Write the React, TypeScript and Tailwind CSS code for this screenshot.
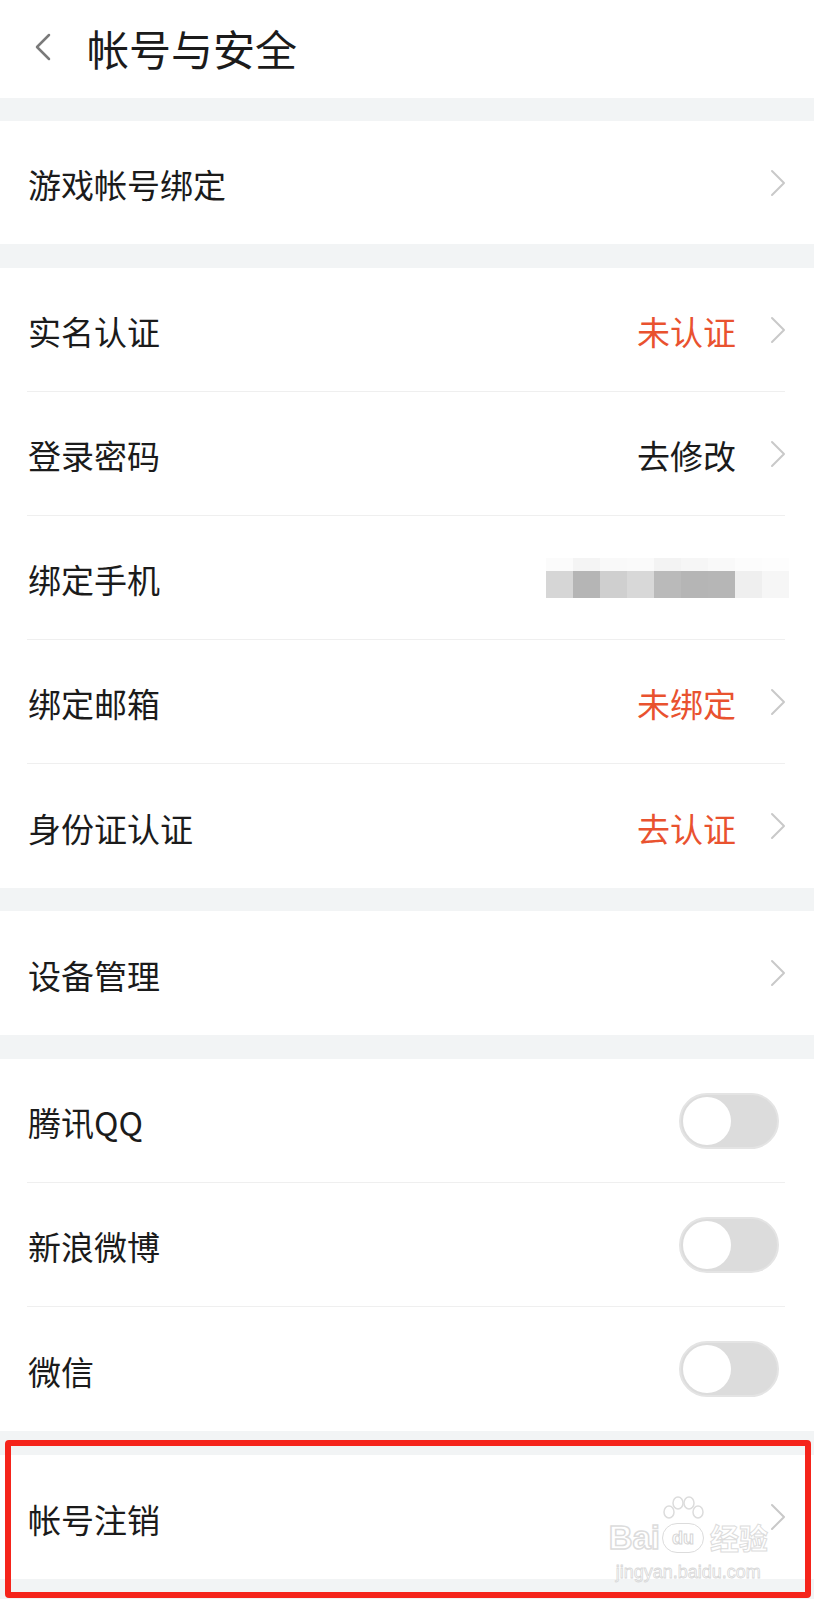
import React from "react";

const font = { fontFamily: '"Noto Sans CJK SC", "Noto Sans", sans-serif' };

const Chevron = () => (
  <svg width="18" height="28" viewBox="0 0 18 28" className="shrink-0">
    <polyline points="3,2 15,14 3,26" fill="none" stroke="#c9c9c9" strokeWidth="2" strokeLinejoin="round" strokeLinecap="round" />
  </svg>
);

const Band = ({ h }: { h: string }) => <div className={`w-full bg-[#f2f4f5] ${h}`} />;

const Sep = () => <div className="ml-[27px] mr-[29px] h-px bg-[#efefef]" />;

const Row = ({
  label,
  value,
  valueColor,
  h = "h-[123px]",
  arrow = true,
  children,
}: {
  label: string;
  value?: string;
  valueColor?: string;
  h?: string;
  arrow?: boolean;
  children?: React.ReactNode;
}) => (
  <div className={`flex items-center justify-between bg-white pl-[28px] pr-[27px] ${h}`}>
    <span className="text-[33px] leading-none text-[#1b1b1b] pt-[4px]">{label}</span>
    <div className="flex items-center">
      {value && (
        <span className={`text-[33px] leading-none pt-[4px] mr-[33px] ${valueColor ?? "text-[#1b1b1b]"}`}>{value}</span>
      )}
      {children}
      {arrow && <Chevron />}
    </div>
  </div>
);

const Toggle = () => (
  <div className="relative mr-[8px] h-[56px] w-[100px] rounded-full border-2 border-[#e4e4e4] bg-[#dcdcdc]">
    <div className="absolute left-[2px] top-[2px] h-[48px] w-[48px] rounded-full bg-white" />
  </div>
);

const Mosaic = () => {
  const top = ["#fbfbfb", "#f4f4f4", "#f9f9f9", "#fafafa", "#f3f3f3", "#f6f6f6", "#f9f9f9", "#fcfcfc", "#fdfdfd"];
  const mid = ["#d6d6d6", "#b5b5b5", "#cfcfcf", "#d8d8d8", "#bababa", "#b5b5b5", "#b6b6b6", "#efefef", "#f6f6f6"];
  return (
    <div className="flex flex-col mr-[-2px]">
      <div className="flex">
        {top.map((c, i) => (
          <div key={i} className="h-[13px] w-[27px]" style={{ background: c }} />
        ))}
      </div>
      <div className="flex">
        {mid.map((c, i) => (
          <div key={i} className="h-[27px] w-[27px]" style={{ background: c }} />
        ))}
      </div>
    </div>
  );
};

const Watermark = () => (
  <div className="pointer-events-none absolute right-[46px] bottom-[18px] flex flex-col items-center">
    <div className="flex items-center gap-[2px]">
      <span className="text-[33px] leading-none font-bold [font-family:'Liberation_Sans',sans-serif] text-transparent [-webkit-text-stroke:1.5px_#dcdcdc]">Bai</span>
      <div className="relative flex flex-col items-center">
        <svg width="46" height="26" viewBox="0 0 46 26" className="absolute -top-[27px]">
          <ellipse cx="9" cy="16" rx="5" ry="6" fill="none" stroke="#dcdcdc" strokeWidth="1.5" />
          <ellipse cx="18" cy="7" rx="5" ry="6" fill="none" stroke="#dcdcdc" strokeWidth="1.5" />
          <ellipse cx="29" cy="7" rx="5" ry="6" fill="none" stroke="#dcdcdc" strokeWidth="1.5" />
          <ellipse cx="38" cy="16" rx="5" ry="6" fill="none" stroke="#dcdcdc" strokeWidth="1.5" />
        </svg>
        <div className="flex h-[30px] w-[42px] items-center justify-center rounded-full border-[1.5px] border-[#dcdcdc]">
          <span className="text-[18px] leading-none font-bold [font-family:'Liberation_Sans',sans-serif] text-transparent [-webkit-text-stroke:1px_#d6d6d6]">du</span>
        </div>
      </div>
      <span className="text-[29px] leading-none font-bold text-transparent [-webkit-text-stroke:1px_#dcdcdc] ml-[4px]">经验</span>
    </div>
    <span className="mt-[9px] text-[18px] leading-none [font-family:'Liberation_Sans',sans-serif] text-transparent [-webkit-text-stroke:0.8px_#d8d8d8]">jingyan.baidu.com</span>
  </div>
);

export default function App() {
  return (
    <div className="w-[814px] h-[1600px] overflow-hidden bg-white" style={font}>
      <div className="flex h-[98px] items-center bg-white pl-[34px]">
        <svg width="18" height="28" viewBox="0 0 18 28" className="shrink-0 mt-[-4px]">
          <polyline points="15,2 3,14 15,26" fill="none" stroke="#7a7a7a" strokeWidth="2.5" strokeLinejoin="round" strokeLinecap="round" />
        </svg>
        <span className="ml-[35px] text-[42px] leading-none text-[#1b1b1b] mt-[-2px]">帐号与安全</span>
      </div>

      <Band h="h-[23px]" />
      <Row label="游戏帐号绑定" />
      <Band h="h-[24px]" />

      <Row label="实名认证" value="未认证" valueColor="text-[#e9522f]" />
      <Sep />
      <Row label="登录密码" value="去修改" />
      <Sep />
      <Row label="绑定手机" arrow={false}>
        <Mosaic />
      </Row>
      <Sep />
      <Row label="绑定邮箱" value="未绑定" valueColor="text-[#e9522f]" />
      <Sep />
      <Row label="身份证认证" value="去认证" valueColor="text-[#e9522f]" h="h-[124px]" />

      <Band h="h-[23px]" />
      <Row label="设备管理" h="h-[124px]" />
      <Band h="h-[24px]" />

      <Row label="腾讯QQ" arrow={false}>
        <Toggle />
      </Row>
      <Sep />
      <Row label="新浪微博" arrow={false}>
        <Toggle />
      </Row>
      <Sep />
      <Row label="微信" arrow={false} h="h-[124px]">
        <Toggle />
      </Row>

      <div className="relative">
        <Band h="h-[24px]" />
        <Row label="帐号注销" h="h-[124px]" />
        <Band h="h-[20px]" />
        <Watermark />
        <div className="absolute left-[5px] top-[9px] h-[158px] w-[806px] rounded-[4px] border-[6px] border-[#f5241b]" />
      </div>
    </div>
  );
}
